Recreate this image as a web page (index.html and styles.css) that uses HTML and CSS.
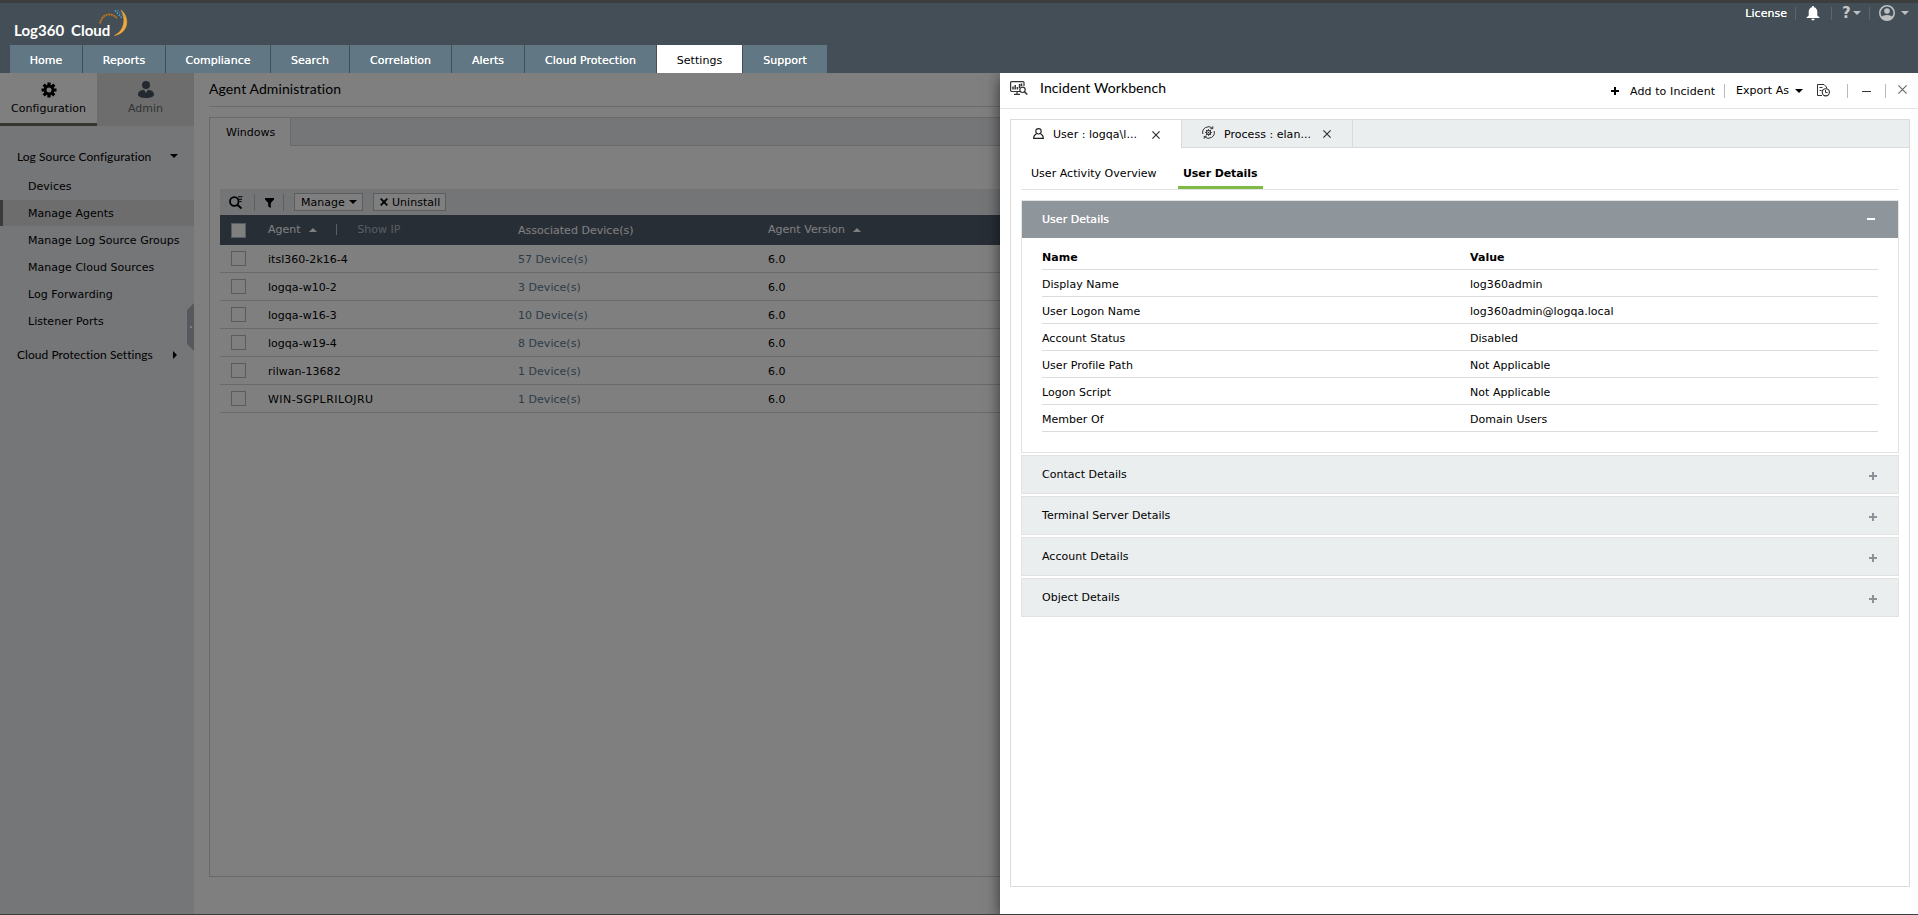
FILE: index.html
```html
<!DOCTYPE html>
<html lang="en">
<head>
    <meta charset="UTF-8">
    <meta name="viewport" content="width=device-width, initial-scale=1.0">
    <title>Log360 Cloud</title>
    <link rel="stylesheet" href="styles.css">
</head>
<body>
    <header class="header">
        <div class="header-top">
            <div class="logo">
                <span class="logo-a">Log360</span><span class="logo-b">Cloud</span>
                <svg class="logo-arc" width="30" height="28" viewBox="0 0 30 28">
                    <path d="M1 14.500C3 4.500 12 3 18 9" fill="none" stroke="#b8741c" stroke-width="2" stroke-dasharray="2 .6"/>
                    <path d="M22 1C31 8 30 24 15.500 26.500C25 22 27.500 10 22 1Z" fill="#f2a93b" stroke="#f2a93b" stroke-width=".5"/>
                    <path d="M16 1.500L23 9" stroke="#4aa3d8" stroke-width="1.600" stroke-dasharray="1.500 1.300"/>
                    <path d="M18.500 1L24 7" stroke="#4aa3d8" stroke-width="1" stroke-dasharray="1.500 1.500"/>
                </svg>
            </div>
            <div class="header-links">
                <span class="license">License</span>
                <span class="h-sep"></span>
                <svg class="bell" width="14" height="15" viewBox="0 0 14 15"><path d="M7 0C6.200 0 6 .6 6 1.200C3.800 1.700 2.700 3.500 2.700 5.800V9.500L.5 11.500V12H13.500V11.500L11.300 9.500V5.800C11.300 3.500 10.200 1.700 8 1.200C8 .6 7.800 0 7 0ZM5.300 12.800A1.700 1.700 0 0 0 8.700 12.800Z" fill="#fff"/></svg>
                <span class="h-sep"></span>
                <span class="help">?</span><i class="caret light"></i>
                <span class="h-sep"></span>
                <svg class="avatar" width="16" height="16" viewBox="0 0 16 16"><circle cx="8" cy="8" r="7.200" fill="none" stroke="#bcc0c2" stroke-width="1.600"/><circle cx="8" cy="6" r="2.800" fill="#bcc0c2"/><path d="M2.500 12.200C4.500 9.400 11.500 9.400 13.500 12.200C11 16 5 16 2.500 12.200Z" fill="#bcc0c2"/></svg>
                <i class="caret light"></i>
            </div>
        </div>
        <nav class="nav">
            <a class="w72">Home</a>
            <a class="w82">Reports</a>
            <a class="w104">Compliance</a>
            <a class="w78">Search</a>
            <a class="w101">Correlation</a>
            <a class="w72">Alerts</a>
            <a class="w131">Cloud Protection</a>
            <a class="w85 active">Settings</a>
            <a class="w84">Support</a>
        </nav>
    </header>

    <div class="page">
        <aside class="sidebar">
            <div class="side-tabs">
                <div class="side-tab active">
                    <svg width="16" height="16" viewBox="0 0 16 16"><g stroke="#000" stroke-width="3.200"><path d="M8 .5V15.500M.5 8H15.500M2.700 2.700L13.300 13.300M13.300 2.700L2.700 13.300"/></g><circle cx="8" cy="8" r="5.400"/><circle cx="8" cy="8" r="2.500" fill="#fff"/></svg>
                    <span>Configuration</span>
                </div>
                <div class="side-tab">
                    <svg width="16" height="17" viewBox="0 0 16 17"><circle cx="8" cy="4" r="4" fill="#445260"/><path d="M0 13.500C0 10.500 3 9 6 8.800L8 12L10 8.800C13 9 16 10.500 16 13.500C16 15.500 13 17 8 17S0 15.500 0 13.500Z" fill="#445260"/></svg>
                    <span>Admin</span>
                </div>
            </div>
            <div class="side-group">
                <div class="side-head">Log Source Configuration <i class="caret"></i></div>
                <a class="side-item">Devices</a>
                <a class="side-item active">Manage Agents</a>
                <a class="side-item">Manage Log Source Groups</a>
                <a class="side-item">Manage Cloud Sources</a>
                <a class="side-item">Log Forwarding</a>
                <a class="side-item">Listener Ports</a>
            </div>
            <div class="side-head second">Cloud Protection Settings <i class="caret-right"></i></div>
            <svg class="handle" width="7" height="48" viewBox="0 0 7 48"><path d="M7 0L0 7V41L7 48Z" fill="#aab2ba"/><rect x="3" y="23" width="2" height="2" fill="#fff"/></svg>
        </aside>

        <main class="main">
            <h1 class="title">Agent Administration</h1>
            <div class="panel">
                <div class="panel-tabs"><span class="panel-tab">Windows</span></div>
                <div class="agents">
                    <div class="toolbar">
                        <svg class="t-search" width="14" height="13" viewBox="0 0 14 13"><circle cx="5.300" cy="5.500" r="4.300" fill="none" stroke="#000" stroke-width="1.800"/><path d="M8 8.500L12.500 12.500" stroke="#000" stroke-width="2"/><path d="M9 .8H13.500M10 3.300H13M10.500 5.500H12.500" stroke="#000" stroke-width="1"/></svg>
                        <span class="t-sep"></span>
                        <svg class="t-filter" width="9" height="10" viewBox="0 0 9 10"><path d="M0 0H9V1.500L5.800 5V10L3.200 8.500V5L0 1.500Z"/></svg>
                        <span class="t-sep"></span>
                        <span class="btn manage">Manage <i class="caret"></i></span>
                        <span class="btn uninstall"><svg width="8" height="8" viewBox="0 0 8 8"><path d="M.7 .7L7.300 7.300M7.300 .7L.7 7.300" stroke="#000" stroke-width="1.800"/></svg> Uninstall</span>
                    </div>
                    <div class="row thead">
                        <i class="check"></i>
                        <span class="c1">Agent <i class="caret-up"></i><em></em><b>Show IP</b></span>
                        <span class="c2">Associated Device(s)</span>
                        <span class="c3">Agent Version <i class="caret-up"></i></span>
                    </div>
                    <div class="row"><i class="check"></i><span class="c1">itsl360-2k16-4</span><a class="c2">57 Device(s)</a><span class="c3">6.0</span></div>
                    <div class="row"><i class="check"></i><span class="c1">logqa-w10-2</span><a class="c2">3 Device(s)</a><span class="c3">6.0</span></div>
                    <div class="row"><i class="check"></i><span class="c1">logqa-w16-3</span><a class="c2">10 Device(s)</a><span class="c3">6.0</span></div>
                    <div class="row"><i class="check"></i><span class="c1">logqa-w19-4</span><a class="c2">8 Device(s)</a><span class="c3">6.0</span></div>
                    <div class="row"><i class="check"></i><span class="c1">rilwan-13682</span><a class="c2">1 Device(s)</a><span class="c3">6.0</span></div>
                    <div class="row"><i class="check"></i><span class="c1 caps">WIN-SGPLRILOJRU</span><a class="c2">1 Device(s)</a><span class="c3">6.0</span></div>
                </div>
            </div>
        </main>
        <div class="overlay"></div>

        <section class="drawer">
            <div class="drawer-head">
                <svg width="18" height="14" viewBox="0 0 18 14"><path d="M10 10.500H1.500A1 1 0 0 1 .6 9.500V1.600A1 1 0 0 1 1.600 .6H13A1 1 0 0 1 14 1.600V5M4 13.300H10M7 10.500V13" fill="none" stroke="#333" stroke-width="1.200"/><path d="M3 8.500V5.500M5.200 8.500V4M7.400 8.500V6M9.600 7V3M11.500 5V2.500" stroke="#333" stroke-width="1.500"/><circle cx="12.500" cy="8.800" r="2.700" fill="#fff" stroke="#333" stroke-width="1.200"/><path d="M14.400 10.800L17.300 13.500" stroke="#333" stroke-width="1.500"/></svg>
                <h2>Incident Workbench</h2>
                <div class="drawer-actions">
                    <svg class="a-plus" width="8" height="8" viewBox="0 0 8 8"><path d="M4 0V8M0 4H8" stroke="#000" stroke-width="2"/></svg>
                    <span class="a-add">Add to Incident</span>
                    <span class="d-sep"></span>
                    <span class="a-export">Export As</span><i class="caret"></i>
                    <svg class="a-report" width="13" height="13" viewBox="0 0 13 13"><path d="M5 11.500H.5V.5H7L9.500 3V4.500" fill="none" stroke="#333"/><path d="M2.500 3.500H5.500M2.500 6.500H4.500" stroke="#333"/><circle cx="8.800" cy="8.300" r="3.600" fill="#fff" stroke="#333" stroke-width="1.100"/><path d="M8.500 6V8.500H10.500" fill="none" stroke="#333"/></svg>
                    <span class="d-sep"></span>
                    <i class="a-min"></i>
                    <span class="d-sep"></span>
                    <svg class="a-close" width="9" height="9" viewBox="0 0 9 9"><path d="M.4 .4L8.600 8.600M8.600 .4L.4 8.600" stroke="#666" stroke-width="1.100"/></svg>
                </div>
            </div>
            <div class="workbench">
                <div class="wb-tabs">
                    <div class="wb-tab active">
                        <svg width="11" height="11" viewBox="0 0 11 11"><circle cx="5.500" cy="3.300" r="2.700" fill="none" stroke="#222" stroke-width="1.100"/><path d="M3.500 5.700C1.800 6.500 .6 7.800 .6 10.400H10.400C10.400 7.800 9.200 6.500 7.500 5.700" fill="none" stroke="#222" stroke-width="1.100"/></svg>
                        <span>User : logqa\l...</span>
                        <svg class="x" width="8" height="8" viewBox="0 0 8 8"><path d="M.4 .4L7.600 7.600M7.600 .4L.4 7.600" stroke="#333" stroke-width="1.200"/></svg>
                    </div>
                    <div class="wb-tab process">
                        <svg width="13" height="13" viewBox="0 0 13 13"><path d="M10.500 2.300A5.800 5.800 0 0 0 .9 8M2.500 10.700A5.800 5.800 0 0 0 12.100 5M10.800 .3V2.700H8.400M2.200 12.700V10.300H4.600" fill="none" stroke="#333"/><path d="M6.500 3.200V9.800M3.200 6.500H9.800M4.200 4.200L8.800 8.800M8.800 4.200L4.200 8.800" stroke="#333" stroke-width="1.100"/><circle cx="6.500" cy="6.500" r="2" fill="#ebeeef" stroke="#333" stroke-width="1.200"/><circle cx="6.500" cy="6.500" r=".7" fill="#333"/></svg>
                        <span>Process : elan...</span>
                        <svg class="x" width="8" height="8" viewBox="0 0 8 8"><path d="M.4 .4L7.600 7.600M7.600 .4L.4 7.600" stroke="#333" stroke-width="1.200"/></svg>
                    </div>
                </div>
                <div class="wb-body">
                    <div class="sub-tabs">
                        <span class="sub-tab">User Activity Overview</span>
                        <span class="sub-tab active">User Details</span>
                    </div>
                    <div class="card open">
                        <div class="card-head">User Details <i class="minus"></i></div>
                        <div class="details">
                            <div class="detail head"><span>Name</span><span>Value</span></div>
                            <div class="detail"><span>Display Name</span><span>log360admin</span></div>
                            <div class="detail"><span>User Logon Name</span><span>log360admin@logqa.local</span></div>
                            <div class="detail"><span>Account Status</span><span>Disabled</span></div>
                            <div class="detail"><span>User Profile Path</span><span>Not Applicable</span></div>
                            <div class="detail"><span>Logon Script</span><span>Not Applicable</span></div>
                            <div class="detail"><span>Member Of</span><span>Domain Users</span></div>
                        </div>
                    </div>
                    <div class="card closed">Contact Details <i class="plus"></i></div>
                    <div class="card closed">Terminal Server Details <i class="plus"></i></div>
                    <div class="card closed">Account Details <i class="plus"></i></div>
                    <div class="card closed">Object Details <i class="plus"></i></div>
                </div>
            </div>
        </section>
    </div>
    <div class="bottom-strip"></div>
</body>
</html>
```
FILE: styles.css
```css
* {
    box-sizing: border-box;
}

body {
    margin: 0;
    height: 915px;
    display: flex;
    flex-direction: column;
    overflow: hidden;
    font-family: Verdana, "DejaVu Sans", sans-serif;
    font-size: 11px;
    letter-spacing: 0.03px;
    color: #000;
    background-color: #fff;
}

svg {
    display: block;
    flex: none;
}

/* carets */
.caret {
    width: 0;
    height: 0;
    border-left: 4px solid transparent;
    border-right: 4px solid transparent;
    border-top: 4px solid #000;
}

.caret.light {
    border-top-color: #bcc0c2;
}

.caret-up {
    display: inline-block;
    border-left: 4px solid transparent;
    border-right: 4px solid transparent;
    border-bottom: 4px solid #fff;
}

.caret-right {
    border-top: 4px solid transparent;
    border-bottom: 4px solid transparent;
    border-left: 4px solid #000;
}

/* header */
.header {
    height: 73px;
    flex: none;
    background-color: #434e56;
    border-top: 3px solid #3c3d3d;
}

.header-top {
    height: 42px;
    display: flex;
    justify-content: space-between;
}

.logo {
    display: flex;
    padding-left: 14px;
    font-family: Lato, sans-serif;
    font-size: 15px;
    font-weight: bold;
    line-height: 18px;
    color: #fff;
}

.logo span {
    margin-top: 18px;
}

.logo-a {
    width: 57px;
}

.logo-b {
    width: 28px;
    white-space: nowrap;
}

.logo-arc {
    margin-top: 6px;
}

.header-links {
    display: flex;
    height: 20px;
    align-items: center;
    padding-right: 9px;
    color: #fff;
}

.license {
    text-shadow: 0 0 .5px #fff;
}

.h-sep {
    width: 1px;
    height: 13px;
    background-color: #5d666d;
}

.license + .h-sep {
    margin: 0 10px 0 8px;
}

.bell + .h-sep {
    margin: 0 10px 0 11px;
}

.header-links .caret + .h-sep {
    margin: 0 9px 0 8px;
}

.help {
    font-size: 15px;
    font-weight: bold;
    width: 11px;
    color: #c4c8ca;
}

.avatar + .caret {
    margin-left: 6px;
}

.nav {
    display: flex;
    gap: 1px;
    padding-left: 10px;
}

.nav a {
    height: 28px;
    line-height: 31px;
    text-align: center;
    color: #fff;
    background-color: #627784;
    text-shadow: 0 0 .5px #fff;
}

.nav .active {
    color: #000;
    background-color: #fff;
    text-shadow: none;
}

.w72 { width: 72px; }
.w78 { width: 78px; }
.w82 { width: 82px; }
.w84 { width: 84px; }
.w85 { width: 85px; }
.w101 { width: 101px; }
.w104 { width: 104px; }
.w131 { width: 131px; }

/* page */
.page {
    flex: 1;
    display: flex;
    position: relative;
    overflow: hidden;
}

.overlay {
    position: absolute;
    top: 0;
    left: 0;
    width: 100%;
    height: 100%;
    background-color: rgba(0, 0, 0, 0.5);
}

.bottom-strip {
    height: 1px;
    background-color: #3d3d40;
}

/* sidebar */
.sidebar {
    position: relative;
    width: 194px;
    background-color: #eaecf0;
}

.side-tabs {
    display: flex;
    height: 53px;
}

.side-tab {
    width: 97px;
    padding-top: 8px;
    display: flex;
    flex-direction: column;
    align-items: center;
    background-color: #dadbdc;
    color: #666;
}

.side-tab span {
    margin-top: 4px;
    line-height: 14px;
}

.side-tab.active {
    color: #000;
    background-color: #fff;
    border-bottom: 3px solid #6a6a62;
    padding-top: 9px;
}

.side-group {
    padding-top: 17px;
}

.side-head {
    display: flex;
    align-items: center;
    justify-content: space-between;
    height: 26px;
    padding: 0 16px 0 17px;
    font-family: Lato, sans-serif;
    font-size: 12px;
    letter-spacing: 0.05px;
}

.side-head.second {
    margin-top: 7px;
}

.side-head.second .caret-right {
    margin: 2px 1px 0 0;
}

.side-item {
    display: block;
    height: 26px;
    margin-bottom: 1px;
    padding-left: 28px;
    line-height: 27px;
    white-space: nowrap;
}

.side-head + .side-item {
    margin-top: 4px;
}

.side-item.active {
    padding-left: 25px;
    background-color: #dadbdc;
    border-left: 3px solid #77777a;
}

.handle {
    position: absolute;
    right: 0;
    top: 230px;
}

/* main content */
.main {
    flex: 1;
    padding-left: 15px;
}

.title {
    margin: 0 0 10px;
    height: 34px;
    line-height: 32px;
    font-family: Lato, sans-serif;
    font-size: 14px;
    font-weight: normal;
    letter-spacing: 0.1px;
    border-bottom: 1px solid #d6d6d8;
}

.panel {
    height: 760px;
    border: 1px solid #d0d2d4;
}

.panel-tabs {
    height: 28px;
    background-color: #eaecf0;
    border-bottom: 1px solid #d0d2d4;
}

.panel-tab {
    display: block;
    width: 81px;
    height: 28px;
    padding-left: 16px;
    line-height: 29px;
    background-color: #fff;
    border-right: 1px solid #d0d2d4;
}

.agents {
    padding: 43px 0 0 10px;
}

.toolbar {
    display: flex;
    align-items: center;
    height: 26px;
    padding-left: 9px;
    background-color: #e8eaec;
}

.t-sep {
    width: 1px;
    height: 17px;
    margin-left: 11px;
    background-color: #b8bcc0;
}

.t-filter {
    margin: 1px -2px 0 10px;
}

.btn {
    display: flex;
    align-items: center;
    gap: 4px;
    height: 18px;
    border: 1px solid #b4babf;
    background-color: #fff;
}

.manage {
    width: 69px;
    margin-left: 10px;
    padding-left: 6px;
}

.uninstall {
    width: 73px;
    margin-left: 10px;
    padding-left: 6px;
}

.row {
    display: flex;
    align-items: center;
    height: 28px;
    padding-left: 11px;
    border-bottom: 1px solid #d0d2d4;
}

.row span,
.row a {
    padding-top: 1px;
}

.row .caps {
    letter-spacing: 0.45px;
}

.thead {
    height: 30px;
    color: #fff;
    background-color: #505c6c;
    border-bottom: 0;
}

.thead .c1,
.thead .c3 {
    padding: 0 0 1px;
}

.check {
    width: 15px;
    height: 15px;
    margin-right: 22px;
    background-color: #fff;
    border: 1px solid #b0b8bf;
}

.c1,
.c2 {
    width: 250px;
}

a.c2 {
    color: #5b7990;
}

.caret-up {
    margin: 0 0 1px 5px;
}

.thead em {
    display: inline-block;
    width: 1px;
    height: 11px;
    margin: 0 20px -2px 19px;
    background-color: #b8bcc0;
}

.thead b {
    font-weight: normal;
    color: #b4bbc3;
}

/* incident workbench drawer */
.drawer {
    position: absolute;
    top: 0;
    left: 1000px;
    width: 918px;
    height: 841px;
    background-color: #fff;
    box-shadow: 0 4px 14px rgba(0, 0, 0, 0.6);
}

.drawer-head {
    display: flex;
    height: 36px;
    padding: 8px 11px 0 10px;
    border-bottom: 1px solid #e2e2e2;
}

.drawer-head h2 {
    flex: 1;
    margin: -2px 0 0 12px;
    font-family: Lato, sans-serif;
    font-size: 14px;
    font-weight: normal;
    line-height: 17px;
    letter-spacing: 0.1px;
}

.drawer-actions {
    display: flex;
    height: 20px;
    align-items: center;
}

.a-plus {
    margin-right: 11px;
}

.a-add {
    width: 94px;
    letter-spacing: 0.1px;
}

.d-sep {
    width: 1px;
    height: 14px;
    background-color: #bbb;
}

.a-export {
    width: 59px;
    margin: -1px 0 0 11px;
}

.a-report {
    margin: -1px 17px 0 14px;
}

.a-min {
    width: 9px;
    height: 1px;
    margin: 0 14px;
    background-color: #333;
}

.a-close {
    margin: -4px 0 0 12px;
}

.workbench {
    height: 768px;
    margin: 10px 8px 0 10px;
    border: 1px solid #dcdcdc;
}

.wb-tabs {
    display: flex;
    height: 28px;
    background-color: #ebeeef;
    border-bottom: 1px solid #d8dadb;
}

.wb-tab {
    display: flex;
    align-items: center;
    width: 171px;
    padding: 1px 0 0 22px;
    border-right: 1px solid #d8dadb;
}

.wb-tab.active {
    height: 28px;
    background-color: #fff;
}

.wb-tab > svg:first-child {
    margin-top: -3px;
}

.wb-tab span {
    flex: none;
    width: 108px;
    padding-left: 9px;
}

.wb-tab.process {
    padding-left: 20px;
}

.wb-body {
    padding: 0 10px;
}

.sub-tabs {
    display: flex;
    height: 42px;
    margin-bottom: 10px;
    border-bottom: 1px solid #e2e2e2;
}

.sub-tab {
    height: 41px;
    padding-left: 10px;
    line-height: 52px;
    width: 157px;
}

.sub-tab.active {
    width: 85px;
    padding-left: 5px;
    font-weight: bold;
    letter-spacing: -0.1px;
    white-space: nowrap;
    border-bottom: 3px solid #7fba46;
}

.card {
    border: 1px solid #e2e2e2;
}

.card.open {
    height: 253px;
}

.card-head {
    display: flex;
    align-items: center;
    justify-content: space-between;
    height: 37px;
    padding: 0 23px 0 20px;
    color: #fff;
    background-color: #8e959b;
    text-shadow: 0 0 .5px #fff;
}

.minus {
    width: 8px;
    height: 2px;
    margin-top: -1px;
    background-color: #fff;
}

.details {
    margin: 5px 20px 0;
}

.detail {
    display: flex;
    height: 27px;
    line-height: 29px;
    border-bottom: 1px solid #d9dbdc;
}

.detail span {
    flex: none;
    width: 428px;
}

.detail span + span {
    width: auto;
}

.detail.head {
    font-weight: bold;
}

.card.closed {
    display: flex;
    align-items: center;
    justify-content: space-between;
    height: 39px;
    margin-top: 2px;
    padding: 0 21px 0 20px;
    background-color: #ebeeef;
}

.plus {
    width: 8px;
    height: 8px;
    margin-top: 2px;
    background: linear-gradient(#8b9298, #8b9298) center / 8px 2px no-repeat, linear-gradient(#8b9298, #8b9298) center / 2px 8px no-repeat;
}
```
